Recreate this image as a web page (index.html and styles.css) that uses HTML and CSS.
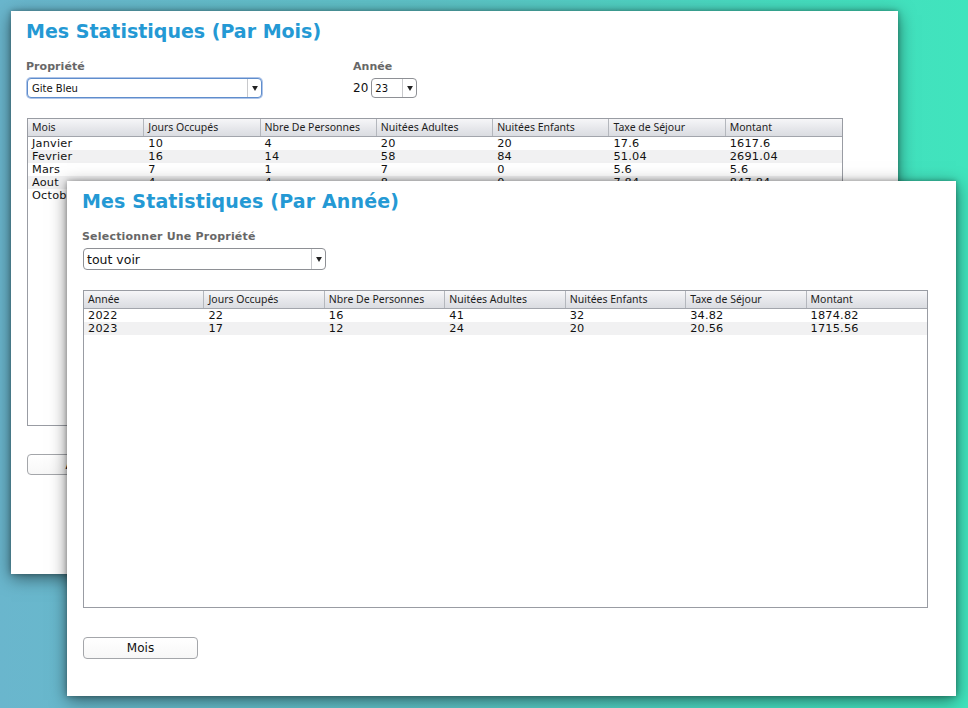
FILE: index.html
```html
<!DOCTYPE html>
<html lang="fr">
<head>
<meta charset="utf-8">
<title>Mes Statistiques</title>
<link rel="stylesheet" href="styles.css">
</head>
<body>
<div class="desk">
  <section class="win win-mois">
    <h1 class="title">Mes Statistiques (Par Mois)</h1>
    <div class="filters">
      <div class="field">
        <div class="label">Propriété</div>
        <div class="select select-focus prop-select">
          <span class="select-value">Gite Bleu</span>
          <span class="select-arrow"><svg width="7" height="6" viewBox="0 0 7 6"><polygon points="0,0 7,0 3.5,6" fill="#222"/></svg></span>
        </div>
      </div>
      <div class="field field-year">
        <div class="label">Année</div>
        <div class="year-row">
          <span class="year-prefix">20</span>
          <div class="select year-select">
            <span class="select-value">23</span>
            <span class="select-arrow"><svg width="7" height="6" viewBox="0 0 7 6"><polygon points="0,0 7,0 3.5,6" fill="#222"/></svg></span>
          </div>
        </div>
      </div>
    </div>
    <div class="table table-mois">
      <div class="thead">
        <div class="th">Mois</div>
        <div class="th">Jours Occupés</div>
        <div class="th">Nbre De Personnes</div>
        <div class="th">Nuitées Adultes</div>
        <div class="th">Nuitées Enfants</div>
        <div class="th">Taxe de Séjour</div>
        <div class="th">Montant</div>
      </div>
      <div class="tr"><span>Janvier</span><span>10</span><span>4</span><span>20</span><span>20</span><span>17.6</span><span>1617.6</span></div>
      <div class="tr"><span>Fevrier</span><span>16</span><span>14</span><span>58</span><span>84</span><span>51.04</span><span>2691.04</span></div>
      <div class="tr"><span>Mars</span><span>7</span><span>1</span><span>7</span><span>0</span><span>5.6</span><span>5.6</span></div>
      <div class="tr"><span>Aout</span><span>4</span><span>4</span><span>8</span><span>0</span><span>7.84</span><span>847.84</span></div>
      <div class="tr"><span>Octobre</span><span></span><span></span><span></span><span></span><span></span><span></span></div>
    </div>
    <button class="btn">Année</button>
  </section>

  <section class="win win-annee">
    <h1 class="title">Mes Statistiques (Par Année)</h1>
    <div class="field">
      <div class="label label-wide">Selectionner Une Propriété</div>
      <div class="select select-lg all-select">
        <span class="select-value">tout voir</span>
        <span class="select-arrow"><svg width="7" height="6" viewBox="0 0 7 6"><polygon points="0,0 7,0 3.5,6" fill="#222"/></svg></span>
      </div>
    </div>
    <div class="table table-annee">
      <div class="thead">
        <div class="th">Année</div>
        <div class="th">Jours Occupés</div>
        <div class="th">Nbre De Personnes</div>
        <div class="th">Nuitées Adultes</div>
        <div class="th">Nuitées Enfants</div>
        <div class="th">Taxe de Séjour</div>
        <div class="th">Montant</div>
      </div>
      <div class="tr"><span>2022</span><span>22</span><span>16</span><span>41</span><span>32</span><span>34.82</span><span>1874.82</span></div>
      <div class="tr"><span>2023</span><span>17</span><span>12</span><span>24</span><span>20</span><span>20.56</span><span>1715.56</span></div>
    </div>
    <button class="btn btn-lower">Mois</button>
  </section>
</div>
</body>
</html>
```

FILE: styles.css
```css
* { box-sizing: border-box; }

html, body {
  margin: 0;
  padding: 0;
  width: 968px;
  height: 708px;
  overflow: hidden;
}

body {
  background: linear-gradient(to right, #6ab6cd 0%, #5dc2c6 45%, #46dcbf 80%, #40e4bd 100%);
  font-family: "DejaVu Sans", sans-serif;
}

.desk {
  position: relative;
  width: 968px;
  height: 708px;
}

.win {
  position: absolute;
  background: #ffffff;
  box-shadow: 0 4px 16px rgba(0, 0, 0, 0.5), 0 0 5px rgba(0, 0, 0, 0.3);
  padding: 7px 0 0 16px;
  display: flex;
  flex-direction: column;
  align-items: flex-start;
}

.win-mois {
  left: 11px;
  top: 11px;
  width: 887px;
  height: 563px;
}

.win-annee {
  left: 67px;
  top: 181px;
  width: 889px;
  height: 515px;
}

.title {
  margin: 0 0 0 -1px;
  font-family: "DejaVu Sans", sans-serif;
  font-weight: bold;
  font-size: 19px;
  line-height: 26px;
  color: #2499d4;
}

.win-annee .title {
  letter-spacing: 0.15px;
}

.filters {
  display: flex;
  gap: 92px;
}

.field {
  display: flex;
  flex-direction: column;
  align-items: flex-start;
  margin-top: 16px;
}

.label {
  margin-left: -1px;
  font-weight: bold;
  font-size: 11px;
  line-height: 14px;
  color: #676767;
  letter-spacing: 0.05px;
}

.label-wide {
  letter-spacing: 0.2px;
}

.select {
  margin-top: 4px;
  display: flex;
  align-items: stretch;
  background: #fff;
  border: 1px solid #8e9095;
  border-radius: 4px;
  color: #111;
}

.select-focus {
  border-color: #5f8dcc;
  box-shadow: 0 0 0 1px rgba(110, 150, 215, 0.55);
}

.select-value {
  flex: 1;
  display: flex;
  align-items: center;
  padding-left: 4px;
  font-size: 10px;
}

.select-arrow {
  width: 14px;
  border-left: 1px solid #c8c9cc;
  display: flex;
  align-items: center;
  justify-content: center;
}

.select-arrow svg {
  width: 6px;
  height: 5px;
}

.prop-select {
  width: 235px;
  height: 20px;
}

.year-row {
  display: flex;
  align-items: flex-end;
  margin-top: 4px;
}

.year-prefix {
  font-size: 12px;
  line-height: 20px;
  color: #111;
  margin-left: -1px;
  margin-right: 3px;
}

.year-select {
  margin-top: 0;
  width: 46px;
  height: 20px;
}

.year-select .select-value {
  padding-left: 3px;
}

.select-lg {
  width: 243px;
  height: 22px;
}

.select-lg .select-value {
  font-size: 12.5px;
  padding-left: 3px;
}

.table {
  margin-top: 20px;
  border: 1px solid #999ca3;
  background: #fff;
}

.table-mois {
  width: 816px;
  height: 308px;
}

.table-annee {
  width: 845px;
  height: 318px;
}

.thead {
  display: grid;
  grid-template-columns: repeat(7, 1fr);
  height: 18px;
  background: linear-gradient(#f6f6f8, #e6e7eb 55%, #dadce1);
  border-bottom: 1px solid #a2a5ac;
}

.th {
  padding-left: 4px;
  font-family: "Noto Sans", "DejaVu Sans", sans-serif;
  font-size: 10.5px;
  line-height: 17px;
  color: #1e1e1e;
  border-right: 1px solid #b4b7bd;
  white-space: nowrap;
  overflow: hidden;
}

.th:last-child {
  border-right: none;
}

.tr {
  display: grid;
  grid-template-columns: repeat(7, 1fr);
  height: 13px;
  font-size: 11.3px;
  line-height: 13px;
  color: #111;
  letter-spacing: 0.2px;
}

.tr:nth-child(odd) {
  background: #f1f1f2;
}

.tr span {
  padding-left: 4px;
  white-space: nowrap;
}

.btn {
  margin-top: 28px;
  width: 115px;
  height: 21px;
  padding: 0;
  background: linear-gradient(#ffffff, #f7f7f7);
  border: 1px solid #a4a6aa;
  border-radius: 4px;
  font-family: "DejaVu Sans", sans-serif;
  font-size: 12px;
  color: #111;
}

.btn-lower {
  margin-top: 29px;
  height: 22px;
}
```
